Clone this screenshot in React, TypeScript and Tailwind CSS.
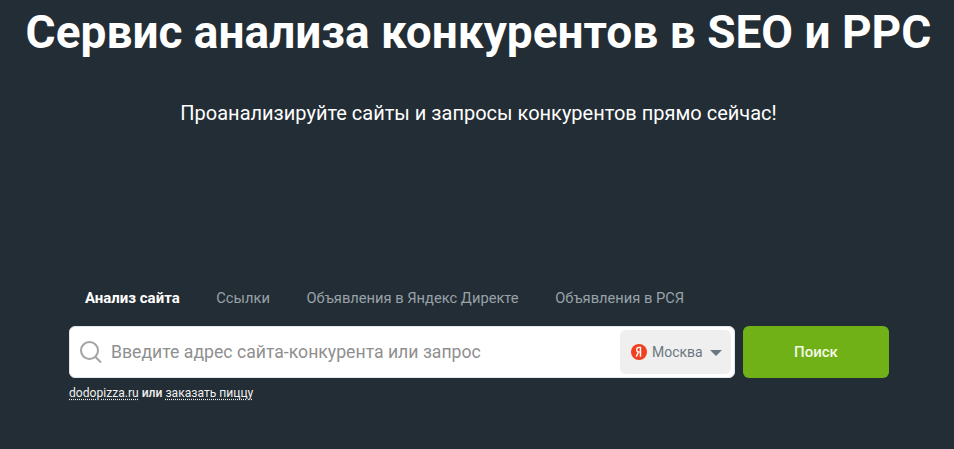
export default function App() {
  return (
    <div className="w-[954px] h-[449px] overflow-hidden bg-[#232d35] font-['Roboto',sans-serif] text-white flex flex-col items-center pl-[3px]">
      <h1 className="mt-[7px] text-[46px] leading-[50px] font-bold whitespace-nowrap text-center">Сервис анализа конкурентов в SEO и PPC</h1>
      <p className="mt-[42px] text-[20px] leading-[28px] whitespace-nowrap text-center">Проанализируйте сайты и запросы конкурентов прямо сейчас!</p>
      <div className="mt-[161px] w-[820px] ml-[1px]">
        <div className="flex items-center h-[20px] pl-[16px] gap-[36.6px] text-[14.7px] text-[#98a2a8]">
          <span className="font-bold text-[15px] text-white">Анализ сайта</span>
          <span>Ссылки</span>
          <span>Объявления в Яндекс Директе</span>
          <span>Объявления в РСЯ</span>
        </div>
        <div className="mt-[18px] flex gap-[8px]">
          <div className="w-[666px] h-[52px] bg-white rounded-[6px] flex items-center pl-[9px] pr-[3px] border border-[#dfe7ec]">
            <svg width="24" height="24" viewBox="0 0 24 24" fill="none" stroke="#a3a3a3" strokeWidth="2" className="shrink-0">
              <circle cx="10.5" cy="10.5" r="8.5" />
              <path d="M16.5 17l5.5 5.5" />
            </svg>
            <span className="ml-[8px] text-[17.65px] text-[#8f8f8f] whitespace-nowrap flex-1">Введите адрес сайта-конкурента или запрос</span>
            <div className="w-[111px] h-[44px] rounded-[6px] bg-[#efefef] flex items-center pl-[11px] text-[14px] text-[#6b7780] shrink-0">
              <svg width="16" height="16" viewBox="0 0 16 16" className="shrink-0">
                <circle cx="8" cy="8" r="8" fill="#f0401f" />
                <path d="M10.200 2.800H8.200C6.200 2.800 4.900 3.900 4.900 5.800c0 1.200.5 2 1.500 2.500L4.600 12.800h1.500l1.700-4.200h.9v4.200h1.500V2.800zM8.700 7.400h-.5c-1 0-1.800-.5-1.800-1.700S7.200 4 8.200 4h.5z" fill="#fff" />
              </svg>
              <span className="ml-[5px]">Москва</span>
              <span className="ml-[7px] w-0 h-0 border-x-[6px] border-x-transparent border-t-[6px] border-t-[#6b7780] mt-[2px]" />
            </div>
          </div>
          <button className="w-[146px] h-[52px] rounded-[6px] bg-[#6fb116] text-[15px] font-medium text-[#f3f8e6]">Поиск</button>
        </div>
        <div className="mt-[7px] text-[12.1px] leading-[16px] text-[#f0f0f0]">
          <span className="underline decoration-dotted underline-offset-2">dodopizza.ru</span>
          <span className="font-medium"> или </span>
          <span className="underline decoration-dotted underline-offset-2">заказать пиццу</span>
        </div>
      </div>
    </div>
  );
}
